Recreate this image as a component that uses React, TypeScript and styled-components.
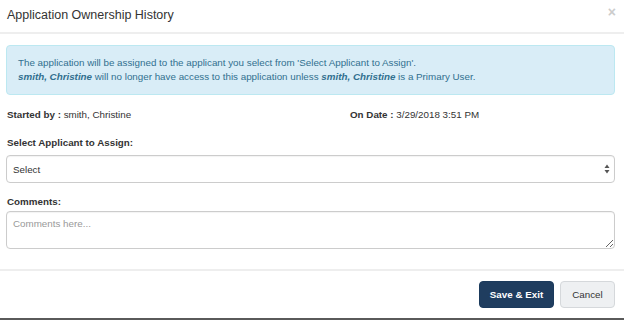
import styled, { createGlobalStyle } from "styled-components";
import type { FC } from "react";

const GlobalStyle = createGlobalStyle`
    html, body {
        margin: 0;
        padding: 0;
        background: #ffffff;
    }
    body {
        font-family: "Liberation Sans", Arial, sans-serif;
        color: #333333;
    }
`;

const Modal = styled.div`
    width: 624px;
    height: 320px;
    box-sizing: border-box;
    display: flex;
    flex-direction: column;
    background: #ffffff;
    border-bottom: 2px solid #5a5a5a;
`;

const Header = styled.div`
    height: 32px;
    box-sizing: content-box;
    display: flex;
    align-items: center;
    justify-content: space-between;
    padding: 0 8px 0 7px;
    border-bottom: 2px solid #eeeeee;
`;

const Title = styled.h4`
    margin: 0;
    font-size: 12.5px;
    font-weight: normal;
    color: #333333;
    margin-top: -2px;
`;

const Close = styled.button`
    border: none;
    background: none;
    padding: 0;
    font-size: 14px;
    font-weight: bold;
    color: #cccccc;
    line-height: 1;
    cursor: pointer;
    margin-top: -8px;
`;

const Body = styled.div`
    padding: 11px 9px 0 6px;
    display: flex;
    flex-direction: column;
`;

const Alert = styled.div`
    background: #d9edf7;
    border: 1px solid #bce8f1;
    border-radius: 4px;
    color: #31708f;
    font-size: 9.8px;
    line-height: 14px;
    padding: 10px 11px;
`;

const InfoRow = styled.div`
    display: grid;
    grid-template-columns: 343px 1fr;
    margin-top: 13px;
    padding-left: 1px;
    font-size: 9.8px;
    line-height: 14px;
`;

const Label = styled.label<{ gap?: number }>`
    display: block;
    margin-top: ${({ gap }) => gap ?? 14}px;
    padding-left: 1px;
    font-size: 9.8px;
    font-weight: bold;
    line-height: 14px;
    color: #333333;
`;

const SelectWrap = styled.div`
    position: relative;
    margin-top: 5px;
`;

const Select = styled.select`
    appearance: none;
    width: 100%;
    height: 28px;
    box-sizing: border-box;
    border: 1px solid #cccccc;
    border-radius: 4px;
    background: #ffffff;
    padding: 0 6px;
    font-family: "Liberation Sans", Arial, sans-serif;
    font-size: 9.8px;
    color: #333333;
    box-shadow: inset 0 1px 1px rgba(0, 0, 0, 0.05);
`;

const Arrows = styled.svg`
    position: absolute;
    right: 5px;
    top: 9px;
    pointer-events: none;
`;

const Comments = styled.textarea`
    display: block;
    margin-top: 2px;
    width: 100%;
    height: 38px;
    box-sizing: border-box;
    border: 1px solid #cccccc;
    border-radius: 4px;
    padding: 6px 6px;
    font-family: "Liberation Sans", Arial, sans-serif;
    font-size: 9.8px;
    color: #333333;
    box-shadow: inset 0 1px 1px rgba(0, 0, 0, 0.05);

    &::placeholder {
        color: #999999;
    }
`;

const Footer = styled.div`
    margin-top: 20px;
    border-top: 2px solid #eeeeee;
    display: flex;
    justify-content: flex-end;
    gap: 6px;
    padding: 10px 9px 0 0;
`;

const Button = styled.button<{ primary?: boolean }>`
    height: 27px;
    box-sizing: border-box;
    border-radius: 4px;
    font-family: "Liberation Sans", Arial, sans-serif;
    font-size: 9.8px;
    padding: 0;
    white-space: nowrap;
    cursor: pointer;
    border: 1px solid ${({ primary }) => (primary ? "#1b3a5c" : "#d5d8db")};
    background: ${({ primary }) => (primary ? "#1f3d5f" : "#eef0f2")};
    color: ${({ primary }) => (primary ? "#ffffff" : "#333333")};
    font-weight: ${({ primary }) => (primary ? "bold" : "normal")};
    width: ${({ primary }) => (primary ? "75px" : "55px")};
`;

const App: FC = () => (
    <>
        <GlobalStyle />
        <Modal>
            <Header>
                <Title>Application Ownership History</Title>
                <Close aria-label="Close">×</Close>
            </Header>
            <Body>
                <Alert>
                    The application will be assigned to the applicant you select from 'Select Applicant to Assign'.
                    <br />
                    <b><i>smith, Christine</i></b> will no longer have access to this application unless{" "}
                    <b><i>smith, Christine</i></b> is a Primary User.
                </Alert>
                <InfoRow>
                    <span>
                        <b>Started by : </b>smith, Christine
                    </span>
                    <span>
                        <b>On Date : </b>3/29/2018 3:51 PM
                    </span>
                </InfoRow>
                <Label>Select Applicant to Assign:</Label>
                <SelectWrap>
                    <Select defaultValue="">
                        <option value="">Select</option>
                    </Select>
                    <Arrows width="6" height="10" viewBox="0 0 6 10">
                        <path d="M3 0.5 L5.5 4 L0.5 4 Z" fill="#555" />
                        <path d="M3 9.5 L5.5 6 L0.5 6 Z" fill="#555" />
                    </Arrows>
                </SelectWrap>
                <Label gap={12}>Comments:</Label>
                <Comments placeholder="Comments here..." />
            </Body>
            <Footer>
                <Button primary>Save &amp; Exit</Button>
                <Button>Cancel</Button>
            </Footer>
        </Modal>
    </>
);

export default App;
